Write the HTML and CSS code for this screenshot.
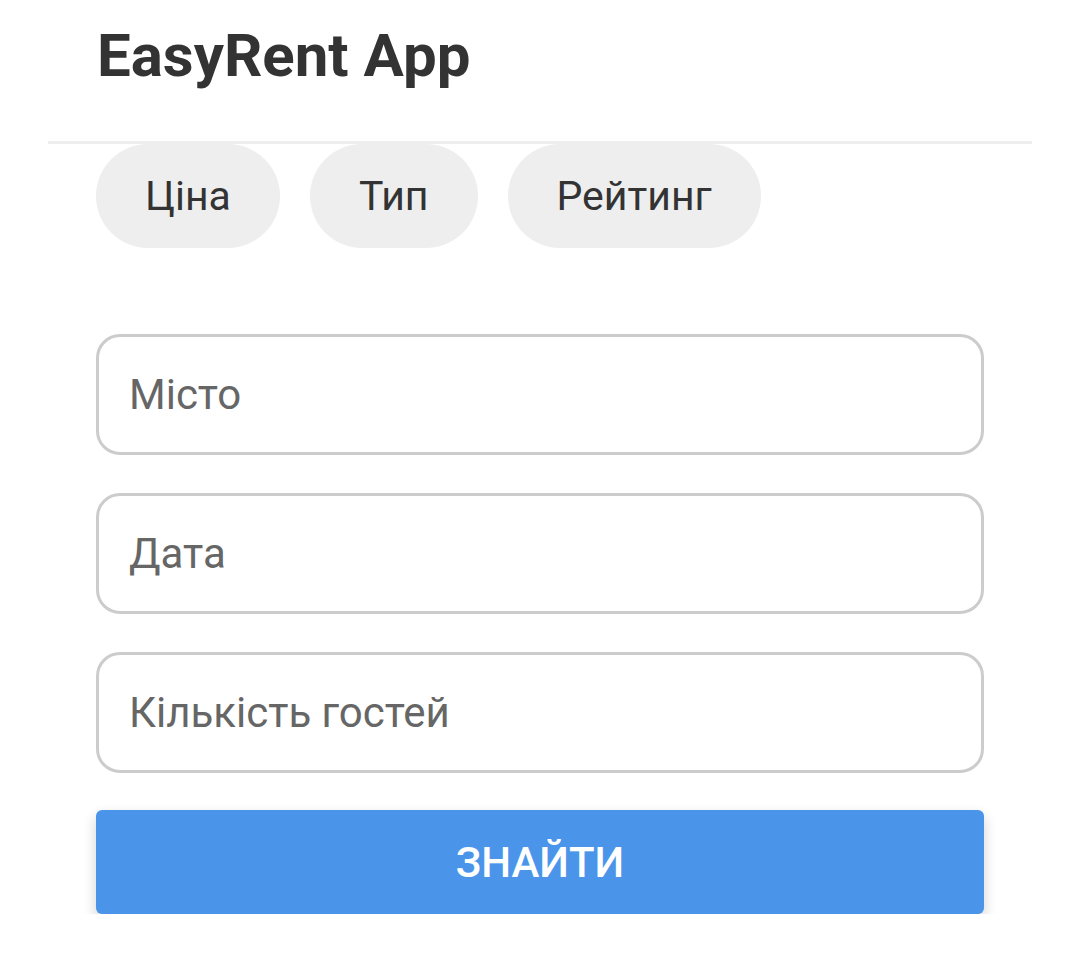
FILE: index.html
```html
<!DOCTYPE html>
<html lang="uk">
<head>
<meta charset="utf-8">
<title>EasyRent App</title>
<link rel="stylesheet" href="styles.css">
</head>
<body>
<div class="app">
  <header class="app-header">
    <h1 class="app-title">EasyRent App</h1>
  </header>
  <main class="content">
    <div class="filters">
      <button class="chip">Ціна</button>
      <button class="chip">Тип</button>
      <button class="chip">Рейтинг</button>
    </div>
    <form class="search-form">
      <input class="field" type="text" placeholder="Місто">
      <input class="field" type="text" placeholder="Дата">
      <input class="field" type="text" placeholder="Кількість гостей">
      <button class="submit" type="button">ЗНАЙТИ</button>
    </form>
  </main>
</div>
</body>
</html>
```
FILE: styles.css
```css
* { box-sizing: border-box; }
html, body { margin: 0; padding: 0; background: #fff; }
body { font-family: Roboto, "Noto Sans", "Liberation Sans", sans-serif; color: #333; }

.app { margin: 0 48px; }

.app-header {
  height: 144px;
  border-bottom: 3px solid #eeeeee;
  padding: 0 49px;
}
.app-title {
  margin: 0;
  padding-top: 16px;
  font-size: 60px;
  line-height: 80px;
  font-weight: 700;
  color: #333;
}

.content { padding: 0 48px; }

.filters {
  display: flex;
  gap: 30px;
}
.chip {
  height: 104px;
  padding: 0 49px;
  border: none;
  border-radius: 52px;
  background: #eeeeee;
  font-family: inherit;
  font-size: 41px;
  color: #333;
}

.search-form {
  display: flex;
  flex-direction: column;
  gap: 38px;
  margin-top: 86px;
}
.field {
  height: 121px;
  border: 3px solid #cccccc;
  border-radius: 24px;
  padding: 0 30px;
  font-family: inherit;
  font-size: 42px;
  color: #333;
  outline: none;
}
.field::placeholder { color: #666; }

.submit {
  margin-top: -1px;
  height: 104px;
  border: none;
  border-radius: 6px;
  background: #4a95ea;
  color: #fff;
  font-family: inherit;
  font-size: 42px;
  font-weight: 500;
  box-shadow: 0 6px 14px rgba(0,0,0,0.18);
}
```
